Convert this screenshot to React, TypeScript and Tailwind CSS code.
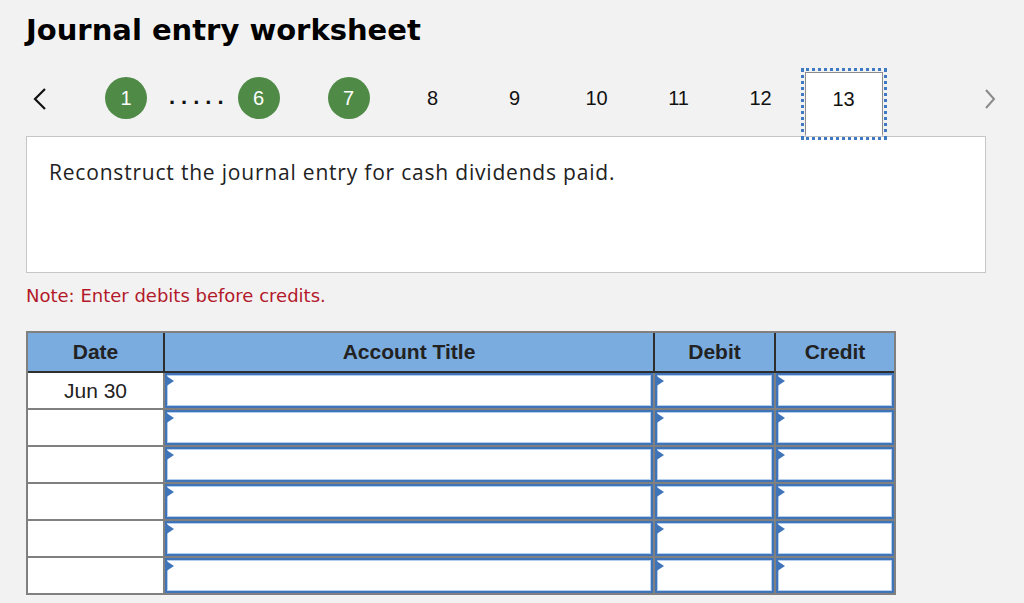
import React from "react";

const rows = ["Jun 30", "", "", "", "", ""];

function InputCell() {
  return (
    <div className="relative bg-white border-2 border-[#3f74b9] shadow-[inset_0_0_0_1px_#b3cdef]">
      <span className="absolute -left-[2px] top-0 w-0 h-0 border-y-[6px] border-y-transparent border-l-[9px] border-l-[#3f74b9]" />
    </div>
  );
}

function StepCircle({ n }: { n: number }) {
  return (
    <span className="flex items-center justify-center w-[42px] h-[42px] rounded-full bg-[#4f8a47] text-white text-[20px]">
      {n}
    </span>
  );
}

export default function App() {
  return (
    <div className="w-[1024px] h-[603px] overflow-hidden bg-[#f2f2f2] pl-[26px] font-['Liberation_Sans',Arial,sans-serif] text-[#111]">
      <h1 className="pt-[12px] text-[29px] leading-[36px] font-bold text-black font-['DejaVu_Sans',Verdana,sans-serif]">
        Journal entry worksheet
      </h1>

      {/* step navigation */}
      <div className="mt-[20px] flex items-start h-[68px]">
        <span className="ml-[6px] mt-[19px] flex">
          <svg width="16" height="24" viewBox="0 0 16 24" fill="none" stroke="#111" strokeWidth="2.2">
            <path d="M13 2 L3 12 L13 22" />
          </svg>
        </span>
        <span className="ml-[57px] mt-[9px]">
          <StepCircle n={1} />
        </span>
        <span className="ml-[22px] mt-[14px] text-[22px] font-bold tracking-[6px] leading-[30px]">.....</span>
        <span className="ml-[8px] mt-[9px]">
          <StepCircle n={6} />
        </span>
        <span className="ml-[48px] mt-[9px]">
          <StepCircle n={7} />
        </span>
        <div className="ml-[22px] flex">
          {[8, 9, 10, 11, 12].map((n) => (
            <span key={n} className="w-[82px] text-center text-[20px] leading-[24px] mt-[18px]">
              {n}
            </span>
          ))}
        </div>
        <div className="relative z-10 -ml-[1px] w-[86px] h-[72px] border-[3px] border-dotted border-[#3f7ac0] p-px">
          <div className="h-full bg-white border border-[#8c8c8c] border-b-white text-center text-[20px] leading-[24px] pt-[14px]">
            13
          </div>
        </div>
        <span className="ml-[97px] mt-[19px] flex">
          <svg width="12" height="24" viewBox="0 0 12 24" fill="none" stroke="#8a8a8a" strokeWidth="2">
            <path d="M2 3 L10 12 L2 21" />
          </svg>
        </span>
      </div>

      {/* prompt */}
      <div className="w-[960px] h-[137px] bg-white border border-[#c6c6c6] pl-[22px] pt-[21px]">
        <p className="text-[21px] leading-[28px] tracking-[0.8px] text-[#222] font-['Open_Sans',sans-serif]">
          Reconstruct the journal entry for cash dividends paid.
        </p>
      </div>

      <p className="mt-[11px] text-[18px] leading-[24px] text-[#b3192b] font-['DejaVu_Sans',Verdana,sans-serif]">
        Note: Enter debits before credits.
      </p>

      {/* journal table */}
      <div className="mt-[23px] w-[870px] border-2 border-[#808080]">
        <div className="grid grid-cols-[135px_488px_119px_118px] gap-x-[2px] bg-[#2e2e2e] pb-[2px] pr-px">
          {["Date", "Account Title", "Debit", "Credit"].map((h) => (
            <div key={h} className="h-[38px] flex items-center justify-center bg-[#7aacdf] text-[21px] font-bold text-[#222]">
              {h}
            </div>
          ))}
        </div>
        <div className="grid grid-cols-[135px_488px_119px_118px] auto-rows-[35px] gap-[2px] bg-[#808080]">
          {rows.map((d, i) => (
            <React.Fragment key={i}>
              <div className="bg-white flex items-center justify-center text-[21px] text-[#222]">{d}</div>
              <InputCell />
              <InputCell />
              <InputCell />
            </React.Fragment>
          ))}
        </div>
      </div>
    </div>
  );
}
